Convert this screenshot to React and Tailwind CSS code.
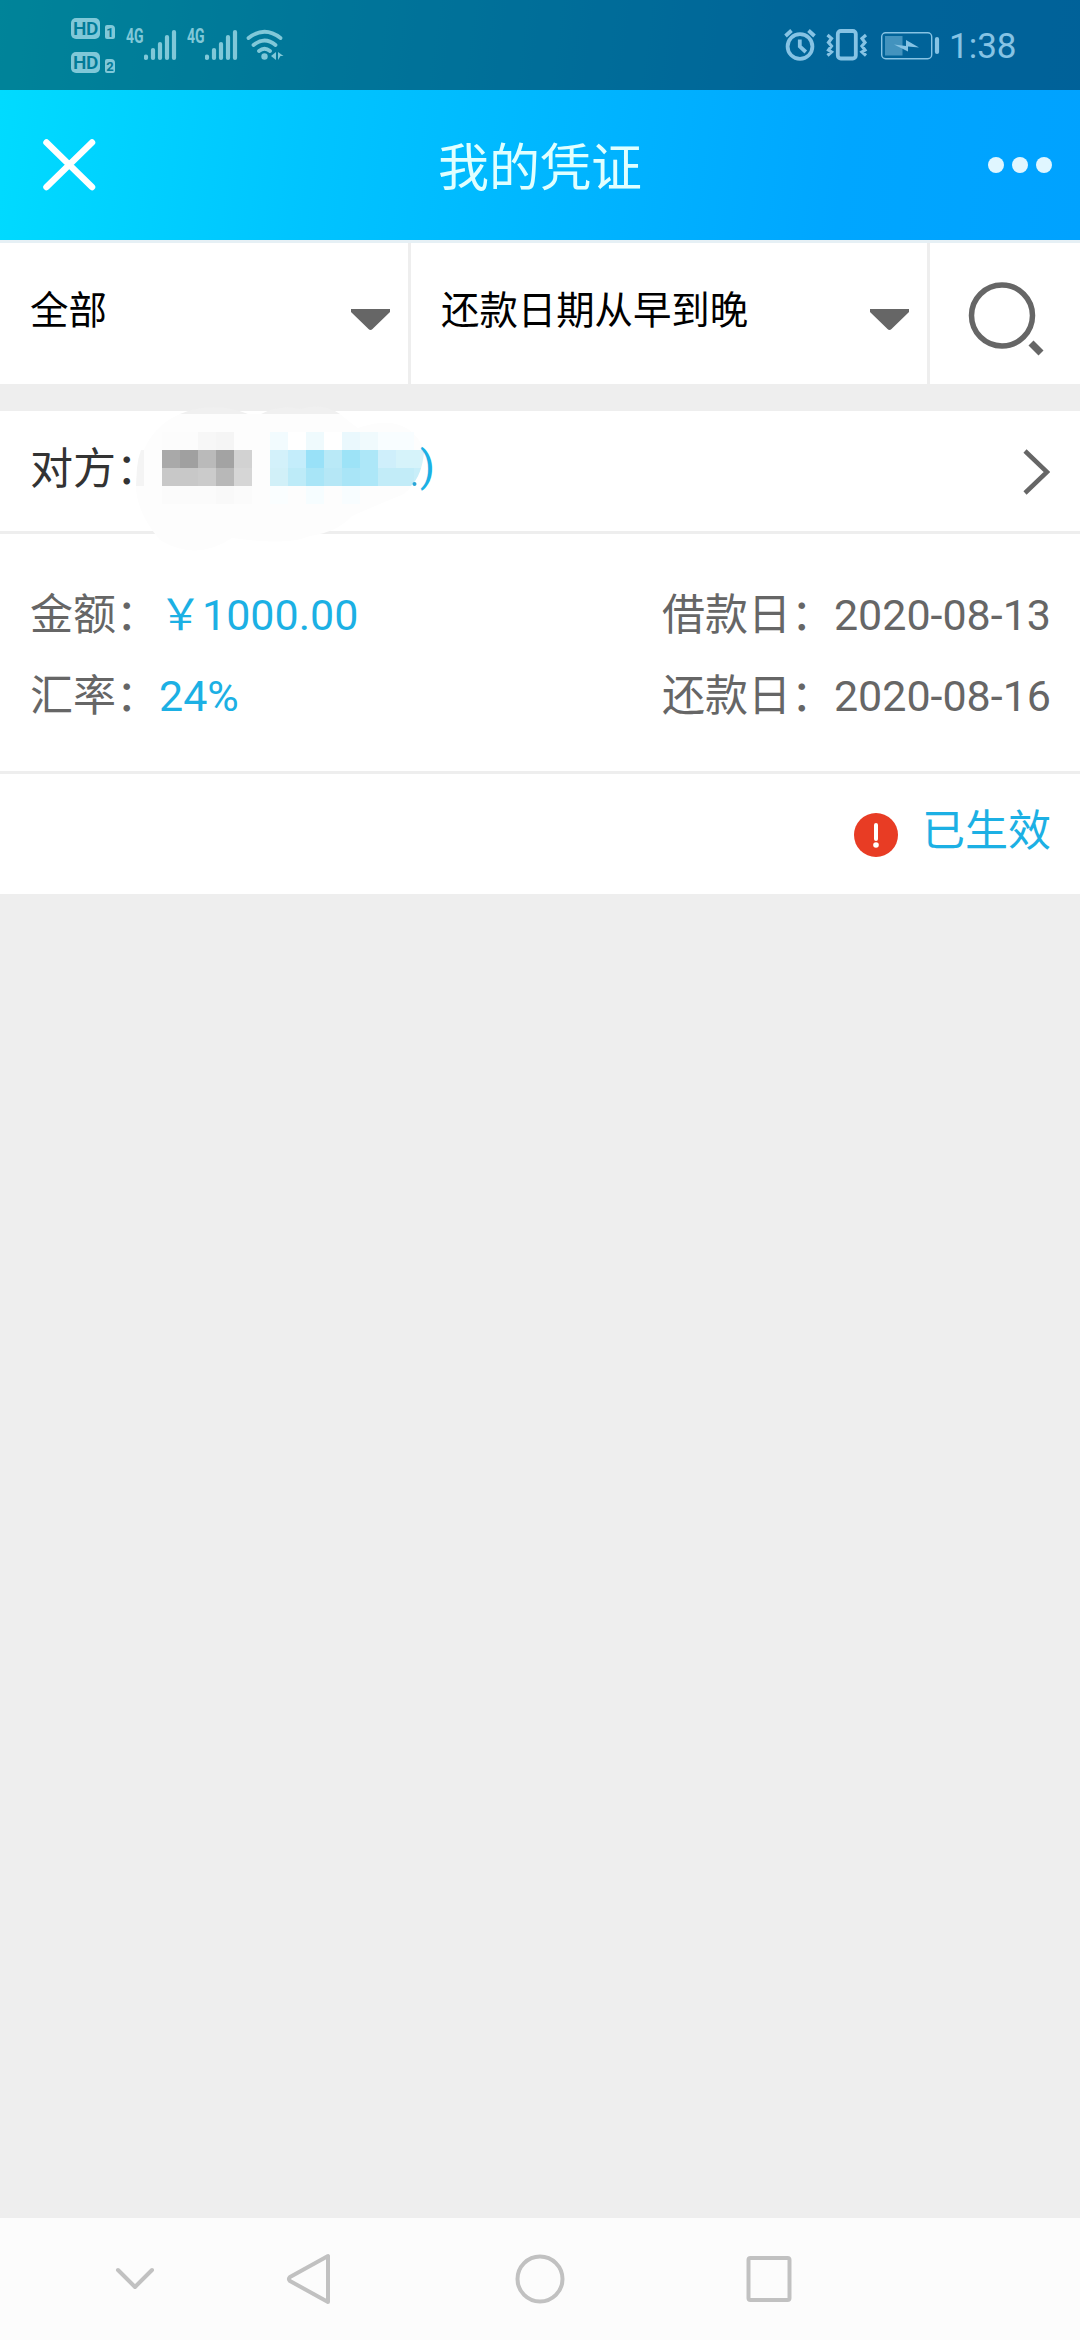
const mosaic = [
    // x, y, colour of every 18px block
    [162, 432, "#fcfcfc"], [180, 432, "#fcfcfc"], [198, 432, "#f7f7f7"], [216, 432, "#f5f5f5"],
    [162, 450, "#a9a9a9"], [180, 450, "#a0a0a0"], [198, 450, "#bababa"], [216, 450, "#a3a3a3"], [234, 450, "#d2d2d2"],
    [162, 468, "#c8c8c8"], [180, 468, "#c8c8c8"], [198, 468, "#cbcbcb"], [216, 468, "#b8b8b8"], [234, 468, "#d6d6d6"],
    [162, 486, "#fbfbfb"], [180, 486, "#fbfbfb"], [198, 486, "#fbfbfb"], [216, 486, "#f9f9f9"], [234, 486, "#fbfbfb"],
    [270, 432, "#f2fbfe"], [288, 432, "#ffffff"], [306, 432, "#effafd"], [324, 432, "#ffffff"],
    [342, 432, "#eaf8fd"], [360, 432, "#f0fafd"], [378, 432, "#f8fdff"], [396, 432, "#f8fdff"],
    [270, 450, "#d3f1fa"], [288, 450, "#c4edfb"], [306, 450, "#99e1f8"], [324, 450, "#b9e9f7"],
    [342, 450, "#9de3f7"], [360, 450, "#ade7f8"], [378, 450, "#cfeffb"], [396, 450, "#d6f3fa"], [414, 450, "#d6f3fa"],
    [270, 468, "#d1f0f8"], [288, 468, "#bdebf8"], [306, 468, "#a8e5f7"], [324, 468, "#b5e7f6"],
    [342, 468, "#a9e5f7"], [360, 468, "#ade7f8"], [378, 468, "#c2ecf8"], [396, 468, "#c2ecf8"], [414, 468, "#c8eef9"],
    [270, 486, "#fafeff"], [306, 486, "#f6fdff"], [342, 486, "#f8fdff"],
];

function SignalBars() {
    return (
        <div className="flex">
            <span className="w-[18px] mt-[26px] text-[20px] leading-[20px] font-bold origin-left scale-x-[0.7]">
                4G
            </span>
            <svg className="w-[34px] h-[90px]" viewBox="144 0 34 90" stroke="currentColor" strokeWidth="4.2" strokeLinecap="round">
                <path d="M146 56.5v1.5M153 50v8M160 44v14M167 37v21M174 32v26" />
            </svg>
        </div>
    );
}

function HdBadge({ n }) {
    return (
        <div className="flex items-end gap-[5px] h-[21px]">
            <span className="w-[29px] h-[21px] rounded-[5px] bg-[#80c8d8] text-[#007b98] text-[19px] leading-[21px] font-semibold flex justify-center tracking-[-0.5px]">
                HD
            </span>
            <span className="w-[10px] h-[14px] rounded-[2px] rounded-tr-[4px] bg-[#80c8d8] text-[#007b98] text-[13px] leading-[15px] font-bold flex justify-center">
                {n}
            </span>
        </div>
    );
}

function StatusBar() {
    return (
        <div className="h-[90px] flex justify-between bg-black/40">
            <div className="flex text-[#80c8d8]">
                <div className="ml-[71px] mt-[18px] w-[55px] flex flex-col gap-[13px]">
                    <HdBadge n="1" />
                    <HdBadge n="2" />
                </div>
                <SignalBars />
                <div className="w-[9px]" />
                <SignalBars />
                <svg className="w-[44px] h-[90px] ml-[5px]" viewBox="244 0 44 90" fill="none" stroke="currentColor" strokeWidth="3.8" strokeLinecap="round">
                    <path d="M248.500 38Q264.500 25.500 280.500 38M253.500 45Q264.500 36 275.500 45M259 51Q264.500 46.500 270 51" />
                    <circle cx="264.500" cy="56.500" r="3.200" fill="currentColor" stroke="none" />
                    <path d="M276 52v8l-5-4zM278 52l5.500 4h-3l-2.500 4z" fill="currentColor" stroke="none" />
                </svg>
            </div>
            <div className="flex text-[#86c3e4]">
                <svg className="w-[126px] h-[90px]" viewBox="820 0 126 90" fill="none" stroke="currentColor" strokeWidth="3.800" overflow="visible">
                    <circle cx="800" cy="46.500" r="12.400" />
                    <path d="M799.800 39.500v7l6 5.500" />
                    <path d="M785.500 36l6-5.500M814.500 36l-6-5.500" />
                    <rect x="837.800" y="31" width="18" height="27.500" rx="3" />
                    <path d="M827.500 35l4 3.500-3 4 3 3.500-3 4 3 2-4 3.500M866 35l-4 3.500 3 4-3 3.500 3 4-3 2 4 3.500" strokeWidth="3.200" />
                    <rect x="881.700" y="32.700" width="50" height="26" rx="4" strokeWidth="1.400" />
                    <path d="M885 36h17.500v19.500H885z" fill="currentColor" fillOpacity="0.500" stroke="none" />
                    <path d="M894 44.500l12 1.500v-6l13 7.500-11-1v5z" fill="currentColor" stroke="none" />
                    <path d="M937 39v13" strokeWidth="4.200" strokeLinecap="round" />
                </svg>
                <span className="w-[134px] pl-[3px] text-[35px] leading-[93px]">1:38</span>
            </div>
        </div>
    );
}

function TitleBar() {
    return (
        <div className="h-[150px] flex items-center justify-between pl-[42px] pr-[28px]">
            <svg className="w-[54px] h-[54px]" viewBox="0 0 54 54" stroke="#fff" strokeWidth="6.500" strokeLinecap="round">
                <path d="M4.500 4.500L50 49M50 4.500L4.500 49" />
            </svg>
            <h1 className="text-[51px] leading-[70px] font-normal text-[#e0ffff] mt-[7px] mr-[4px]">我的凭证</h1>
            <div className="flex gap-2">
                <span className="size-4 rounded-full bg-[#e0f6ff]" />
                <span className="size-4 rounded-full bg-[#e0f6ff]" />
                <span className="size-4 rounded-full bg-[#e0f6ff]" />
            </div>
        </div>
    );
}

function FilterSelect({ label, className }) {
    return (
        <div className={`flex justify-between border-r-[3px] border-[#eee] pl-[30px] ${className}`}>
            <span className="text-[38.4px] leading-[56px] mt-[40px] text-black">{label}</span>
            <svg className="w-[39px] h-[21px] mt-[66px]" viewBox="0 0 39 21" fill="#666">
                <path d="M0 0h39v3L21.500 20q-2 2-4 0L0 3z" />
            </svg>
        </div>
    );
}

function Field({ label, value, blue }) {
    return (
        <div className="flex text-[43px] leading-[81px] text-[#666]">
            <span>{label}：</span>
            <span className={blue ? "text-[#1cb0e4]" : ""}>{value}</span>
        </div>
    );
}

function VoucherCard() {
    return (
        <div className="bg-white h-[483px] mt-[27px]">
            <div className="relative h-[123px] border-b-[3px] border-[#eee] flex items-center justify-between px-[30px]">
                <span className="text-[43px] leading-[60px] text-[#333] mb-[5px]">对方：</span>
                <svg className="w-[27px] h-[46px] mt-[2px]" viewBox="0 0 27 46" fill="none" stroke="#666" strokeWidth="4.500">
                    <path d="M2 2l22 21L2 44" />
                </svg>
                {/* blurred-out name */}
                <svg className="absolute left-0 top-[-11px] w-[450px] h-[160px]" viewBox="0 400 450 160">
                    <path d="M180 414Q213 400 248 414zM261 414Q281 404 300 409Q322 402 340 414z" fill="#f0f0f0" />
                    <path
                        d="M180 414H340Q352 424 358 428Q404 412 422 445Q426 475 404 494Q370 508 352 516Q338 532 310 536Q288 546 232 538Q196 562 160 540Q134 510 136 480Q142 430 180 414z"
                        fill="#fdfdfd"
                    />
                    <path d="M137 468q1-10 4-18h3v36h-8z" fill="#f4f4f4" />
                    <clipPath id="brush">
                        <path d="M130 400H408Q424 430 424 452Q422 475 411 486V560H130z" />
                    </clipPath>
                    <g clipPath="url(#brush)" shapeRendering="crispEdges">
                        {mosaic.map(([x, y, fill]) => (
                            <rect key={`${x}-${y}`} x={x} y={y} width="18" height="18" fill={fill} />
                        ))}
                    </g>
                    <circle cx="414.500" cy="484" r="2" fill="#2ba6d8" />
                </svg>
                <span className="absolute left-[420px] top-[25px] text-[43px] leading-[60px] text-[#1cb0e4]">)</span>
            </div>
            <div className="h-[240px] border-b-[3px] border-[#eee] flex justify-between pl-[30px] pr-[29px] pt-[41px]">
                <div>
                    <Field label="金额" value="￥1000.00" blue />
                    <Field label="汇率" value="24%" blue />
                </div>
                <div>
                    <Field label="借款日" value="2020-08-13" />
                    <Field label="还款日" value="2020-08-16" />
                </div>
            </div>
            <div className="h-[120px] flex items-center justify-end gap-[24px] pr-[29px]">
                <svg className="w-[44px] h-[44px] mt-[2px]" viewBox="0 0 44 44">
                    <circle cx="22" cy="22" r="22" fill="#e83c24" />
                    <path d="M22 12v14" stroke="#fff" strokeWidth="4" strokeLinecap="round" />
                    <circle cx="22" cy="32" r="2.800" fill="#fff" />
                </svg>
                <span className="text-[43px] leading-[60px] mb-[6px] text-[#1cb0e4]">已生效</span>
            </div>
        </div>
    );
}

function NavBar() {
    return (
        <div className="h-[122px] bg-[#fcfcfc]">
            <svg className="w-[1080px] h-[122px]" viewBox="0 2218 1080 122" fill="none" stroke="#c1c1c1" strokeWidth="4" strokeLinecap="round" strokeLinejoin="round">
                <path d="M118 2270l17 17 17-17" />
                <path d="M328 2256v46l-38-21q-2-2 0-4z" />
                <circle cx="540" cy="2279" r="22.500" />
                <rect x="748.500" y="2258" width="41" height="42" rx="2" />
            </svg>
        </div>
    );
}

export default function App() {
    return (
        <div className="w-[1080px] h-[2340px] flex flex-col bg-[#eee] font-[Roboto,'Noto_Sans_CJK_SC',sans-serif]" lang="zh-CN">
            <header className="bg-[linear-gradient(98deg,#00dcff_0%,#00c4ff_30%,#00b6ff_52%,#00a6ff_78%,#00a2ff_100%)]">
                <StatusBar />
                <TitleBar />
            </header>
            <div className="h-[144px] border-t-[3px] border-[#e6f0f5] bg-white flex">
                <FilterSelect label="全部" className="w-[411px] pr-[18px]" />
                <FilterSelect label="还款日期从早到晚" className="w-[519px] pr-[18px]" />
                <svg className="w-[150px] h-[141px]" viewBox="930 243 150 141" fill="none" stroke="#666">
                    <circle cx="1002" cy="315.500" r="30.500" strokeWidth="5.500" />
                    <path d="M1031 343l10 10" strokeWidth="7" />
                </svg>
            </div>
            <VoucherCard />
            <div className="grow" />
            <NavBar />
        </div>
    );
}
